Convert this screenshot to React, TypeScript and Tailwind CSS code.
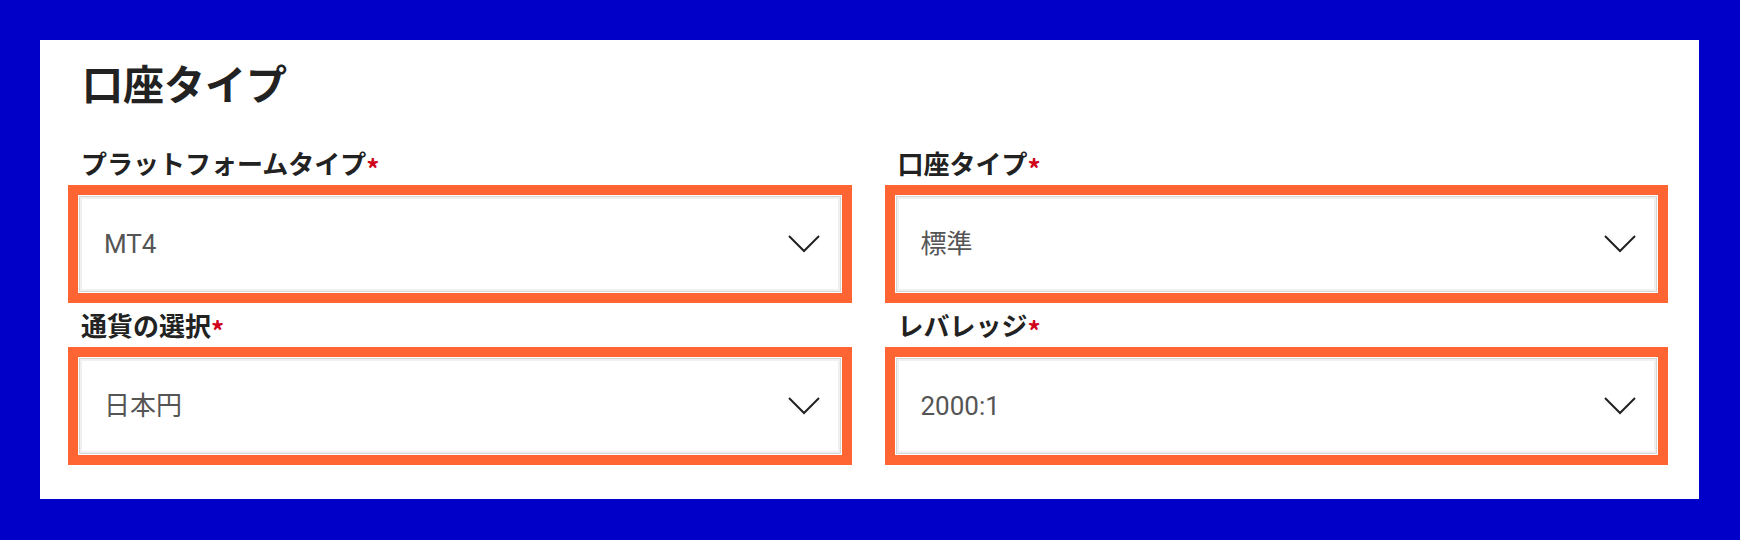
import React from "react";

const Chevron = () => (
  <svg width="32" height="18" viewBox="0 0 32 18" fill="none" className="shrink-0">
    <polyline points="1,1 16,16 31,1" stroke="#222" strokeWidth="2" fill="none" />
  </svg>
);

const Field = ({ label, value }: { label: string; value: string }) => (
  <div className="flex flex-col">
    <div className="pl-[13px] mb-[9px] text-[26px] leading-[26px] font-bold text-[#222] whitespace-nowrap" style={{ fontFamily: '"Noto Sans CJK JP", sans-serif' }}>
      {label}
      <span className="inline-block text-[#d0021b] text-[26px] leading-[26px] translate-y-[5px]">*</span>
    </div>
    <div className="border-[10px] border-[#FF6433] p-px">
      <div className="h-[96px] border border-[#d6d6d6] bg-white shadow-[inset_0_0_0_2px_#f0f0f0] flex items-center justify-between pl-[24px] pr-[20px]">
        <span className="text-[26px] text-[#555]" style={{ fontFamily: 'Roboto, "Noto Sans CJK JP", sans-serif' }}>{value}</span>
        <Chevron />
      </div>
    </div>
  </div>
);

export default function App() {
  return (
    <div className="w-[1740px] h-[540px] bg-[#0000C8] pt-[40px] pl-[40px]">
      <div className="w-[1659px] h-[459px] bg-white pl-[28px] pr-[31px] pt-[22px]">
        <h1 className="text-[41px] leading-[40px] font-bold text-[#222] pl-[14px] mb-[48px]" style={{ fontFamily: '"Noto Sans CJK JP", sans-serif' }}>
          口座タイプ
        </h1>
        <div className="grid grid-cols-2 gap-x-[33px] gap-y-[9px]">
          <Field label="プラットフォームタイプ" value="MT4" />
          <Field label="口座タイプ" value="標準" />
          <Field label="通貨の選択" value="日本円" />
          <Field label="レバレッジ" value="2000:1" />
        </div>
      </div>
    </div>
  );
}
